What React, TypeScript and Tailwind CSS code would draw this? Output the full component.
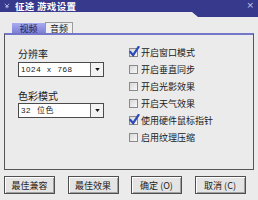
import React from 'react';

const font = "font-['Noto_Sans_CJK_SC','Noto_Sans',sans-serif]";

const Check = ({ checked }: { checked: boolean }) => (
  <div className="relative w-[9px] h-[9px] border border-[#8a8a8a] bg-gradient-to-br from-[#d8d8d8] to-[#f8f8f8] shrink-0">
    {checked && (
      <svg viewBox="0 0 12 12" className="absolute left-[-1px] top-[-3px] w-[11px] h-[11px]">
        <path d="M1.5 6.5 L4.5 10 L10.5 1" fill="none" stroke="#2a4bb8" strokeWidth="2.4" strokeLinecap="round" />
      </svg>
    )}
  </div>
);

const Select = ({ value }: { value: string }) => (
  <div className="w-[86px] h-[15px] border border-[#4a4a4a] bg-white flex items-center">
    <span className="flex-1 pl-[2px] text-[8px] leading-none text-[#202020] tracking-[0.6px] [word-spacing:3px] whitespace-nowrap font-['Liberation_Sans','Noto_Sans_CJK_SC',sans-serif]">{value}</span>
    <div className="w-[13px] h-full border-l border-[#6a6a6a] bg-[#f2f2f2] flex items-center justify-center">
      <svg viewBox="0 0 6 4" className="w-[5px] h-[3px]">
        <polygon points="0,0 6,0 3,4" fill="#111" />
      </svg>
    </div>
  </div>
);

const Btn = ({ label }: { label: string }) => (
  <div className="w-[51px] h-[18px] border border-[#4f4f4f] bg-[#e4e4e4] shadow-[inset_1px_1px_0_#ffffff,inset_-1px_-1px_0_#a0a0a0] flex items-center justify-center text-[9px] leading-none text-[#202020] whitespace-nowrap">
    {label}
  </div>
);

const options = [
  { label: '开启窗口模式', checked: true },
  { label: '开启垂直同步', checked: false },
  { label: '开启光影效果', checked: false },
  { label: '开启天气效果', checked: false },
  { label: '使用硬件鼠标指针', checked: true },
  { label: '启用纹理压缩', checked: false },
];

export default function App() {
  return (
    <div className={`w-[258px] h-[200px] bg-[#ebebeb] flex flex-col overflow-hidden ${font}`}>
      {/* Title bar */}
      <div className="h-[17px] flex items-start">
        <div className="flex-1 h-[12px] bg-[#373a8c] flex items-center pl-[4px] gap-[5px]">
          <svg viewBox="0 0 8 8" className="w-[6px] h-[6px]">
            <path d="M1 1 L4 4 L7 1 M4 4 V7 M1.5 5 H6.5" fill="none" stroke="#b8bce8" strokeWidth="1.2" />
          </svg>
          <span className="text-[9.5px] leading-[12px] font-bold text-white tracking-[0.3px] whitespace-nowrap">征途 游戏设置</span>
        </div>
        <svg viewBox="0 0 8 17" className="w-[8px] h-[17px] block">
          <polygon points="0,0 8,0 8,17 6,17 0,12" fill="#373a8c" />
        </svg>
        <div className="w-[58px] h-[17px] bg-[#373a8c] flex justify-end pr-[4px] pt-[1px]">
          <span className="text-[9px] leading-none text-[#c8cbef] font-['DejaVu_Sans',sans-serif]">×</span>
        </div>
      </div>

      {/* Tabs */}
      <div className="mt-[5px] h-[11px] pl-[12px] flex items-end">
        <div className="w-[33px] h-[10px] bg-gradient-to-b from-[#a9acf0] to-[#7c80d6] flex items-center justify-center text-[9px] leading-none text-[#1c1c4a]">
          视频
        </div>
        <div className="w-[28px] h-[11px] border border-b-0 border-[#9a9a9a] bg-[#f0f0f0] flex items-center justify-center text-[9px] leading-none text-[#202020]">
          音频
        </div>
      </div>

      {/* Panel */}
      <div className="mx-[4px] h-[137px] border border-[#555] border-t-2 border-t-[#7477c9] flex">
        <div className="w-[124px] pl-[13px] pt-[13px] flex flex-col">
          <span className="text-[10px] leading-[12px] text-[#202020]">分辨率</span>
          <div className="mt-[2px]"><Select value="1024 x 768" /></div>
          <span className="mt-[13px] text-[10px] leading-[12px] text-[#202020]">色彩模式</span>
          <div className="mt-[1px]"><Select value="32 位色" /></div>
        </div>
        <div className="flex flex-col pt-[9px]">
          {options.map((o) => (
            <div key={o.label} className="h-[17px] flex items-center gap-[3px]">
              <Check checked={o.checked} />
              <span className="text-[9px] leading-none text-[#202020]">{o.label}</span>
            </div>
          ))}
        </div>
      </div>

      {/* Buttons */}
      <div className="mt-[6px] pl-[4px] flex gap-[12.5px]">
        <Btn label="最佳兼容" />
        <Btn label="最佳效果" />
        <Btn label="确定 (O)" />
        <Btn label="取消 (C)" />
      </div>
    </div>
  );
}
